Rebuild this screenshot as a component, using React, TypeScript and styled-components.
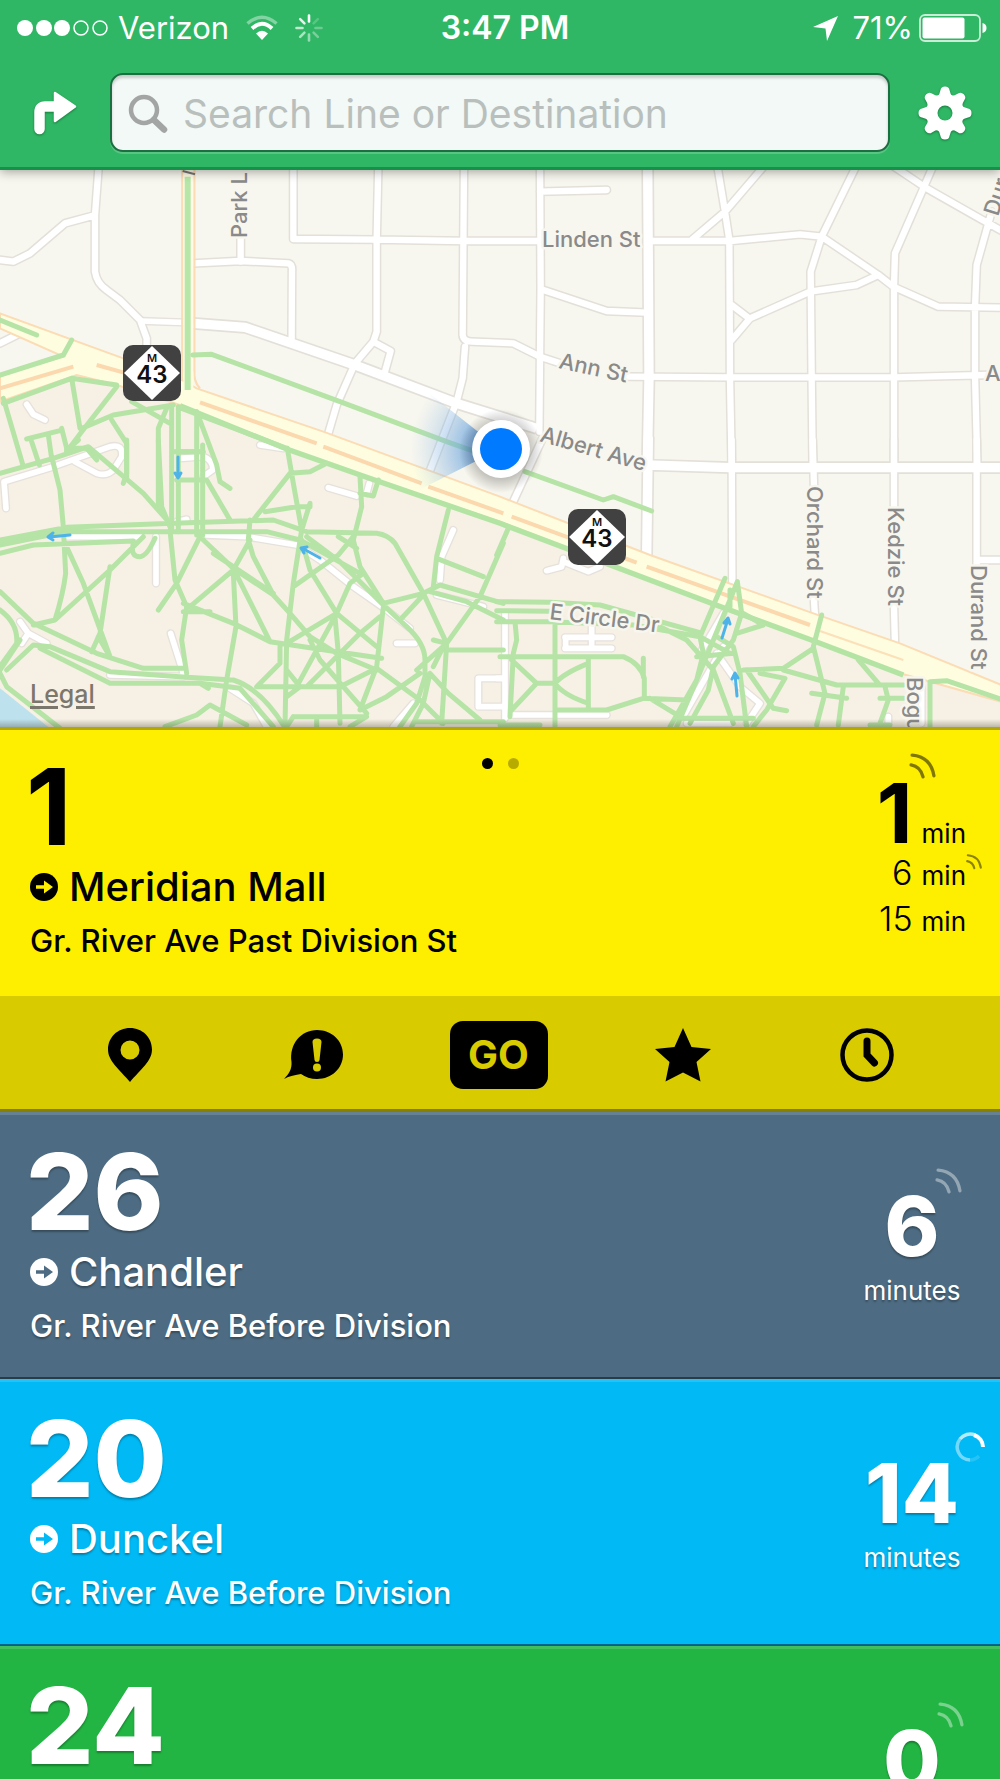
import React from 'react';
import styled, { createGlobalStyle, css } from 'styled-components';

const sans = '"Inter", "Roboto", "Liberation Sans", sans-serif';

const GlobalStyle = createGlobalStyle`
  *, *::before, *::after { box-sizing: border-box; }
  body { margin: 0; font-family: ${sans}; background: #22b543; }
  button, input { font: inherit; }
`;

const Screen = styled.main`
  display: flex;
  flex-direction: column;
  height: 100vh;
  overflow: hidden;
`;

/* ---------- header ---------- */

const Header = styled.header`
  position: relative;
  z-index: 1;
  flex: none;
  background: #2fb765;
  border-bottom: 3px solid #15914a;
  color: #fff;
  box-shadow: 0 2px 10px rgba(0, 0, 0, 0.35);
`;

const StatusBar = styled.div`
  display: grid;
  grid-template-columns: 1fr auto 1fr;
  align-items: center;
  height: 56px;
  padding: 0 7px 0 17px;
  font-size: 31px;
  line-height: 40px;
`;

const StatusGroup = styled.div<{ $end?: boolean }>`
  display: flex;
  align-items: center;
  justify-content: ${(p) => (p.$end ? 'flex-end' : 'flex-start')};
  gap: ${(p) => (p.$end ? 6 : 17)}px;
  padding-right: ${(p) => (p.$end ? 6 : 0)}px;
`;

const Carrier = styled.span`
  display: flex;
  align-items: center;
  gap: 9px;
`;

const Clock = styled.time`
  font-size: 32px;
  font-weight: 600;
`;

const Percent = styled.span`
  padding-left: 8px;
`;

const SearchRow = styled.div`
  display: grid;
  grid-template-columns: 110px 1fr 110px;
  align-items: center;
  padding: 17px 0 15px;
`;

const IconButton = styled.button`
  display: flex;
  align-items: center;
  justify-content: center;
  height: 78px;
  padding: 0;
  border: 0;
  background: none;
  color: inherit;
  cursor: pointer;
  filter: drop-shadow(0 1px 1px rgba(0, 60, 20, 0.5));
`;

const SearchBox = styled.label`
  display: flex;
  align-items: center;
  gap: 15px;
  height: 79px;
  padding: 2px 16px 0;
  border: 2px solid #1c6f40;
  border-radius: 13px;
  background: #f2f9f6;
  box-shadow: inset 0 3px 3px rgba(0, 0, 0, 0.18), 0 2px 0 rgba(255, 255, 255, 0.2);
`;

const SearchInput = styled.input`
  flex: 1;
  min-width: 0;
  padding: 0;
  border: 0;
  outline: 0;
  background: none;
  font-size: 39px;
  line-height: 48px;
  color: #555;
  &::placeholder { color: #b9bfbc; opacity: 1; }
`;

/* ---------- map ---------- */

const MapArea = styled.section`
  position: relative;
  flex: none;
  aspect-ratio: 1000 / 557;
  overflow: hidden;
  background: #f8f7ef;
  &::after {
    content: '';
    position: absolute;
    inset: auto 0 0;
    height: 8px;
    background: linear-gradient(transparent, rgba(60, 50, 30, 0.3));
  }
`;

const MapSvg = styled.svg`
  display: block;
  width: 100%;
  height: 100%;
  font-family: ${sans};
`;

const LegalLink = styled.a`
  position: absolute;
  left: 30px;
  bottom: 17px;
  font-size: 25px;
  line-height: 32px;
  font-weight: 500;
  color: #7c776d;
  text-decoration-thickness: 3px;
  text-underline-offset: 3px;
`;

/* ---------- routes ---------- */

const RouteList = styled.ul`
  flex: 1;
  min-height: 0;
  margin: 0;
  padding: 0;
  list-style: none;
  overflow-y: auto;
  scrollbar-width: none;
`;

const Route = styled.li<{ $bg: string; $dark?: boolean }>`
  background: ${(p) => p.$bg};
  color: ${(p) => (p.$dark ? '#000' : '#fff')};
  text-shadow: ${(p) => (p.$dark ? 'none' : '0 2px 2px rgba(0, 0, 0, 0.3)')};
  box-shadow: inset 0 3px 0 ${(p) => (p.$dark ? 'rgba(90, 80, 0, 0.45)' : 'rgba(255, 255, 255, 0.14)')},
    inset 0 -2px 0 rgba(0, 0, 0, 0.45);
`;

const RouteBody = styled.div<{ $tall?: boolean }>`
  position: relative;
  display: flex;
  justify-content: space-between;
  min-height: ${(p) => (p.$tall ? 269 : 267)}px;
  padding: 41px 0 30px 30px;
`;

const RouteNumber = styled.h2<{ $slim?: boolean }>`
  margin: 0 0 17px -4px;
  font-size: 106px;
  line-height: 78px;
  font-weight: ${(p) => (p.$slim ? 700 : 800)};
`;

const Headsign = styled.p`
  display: flex;
  align-items: center;
  gap: 11px;
  margin: 0 0 10px;
  font-size: 40px;
  line-height: 48px;
  font-weight: 500;
`;

const StopName = styled.p`
  margin: 0;
  font-size: 31px;
  line-height: 40px;
  font-weight: 500;
`;

const Countdown = styled.div`
  flex: none;
  display: flex;
  flex-direction: column;
  align-items: center;
  gap: 18px;
  width: 96px;
  margin: 42px 40px 0 0;
  font-size: 26px;
  line-height: 32px;
`;

const bigTime = css`
  position: relative;
  font-size: 83px;
  line-height: 62px;
`;

const CountdownNumber = styled.strong`
  ${bigTime}
  font-weight: 800;
`;

const Badge = styled.span<{ $lift: number }>`
  position: absolute;
  left: 100%;
  bottom: 100%;
  margin: 0 0 ${(p) => p.$lift}px -4px;
  display: flex;
`;

const Departures = styled.ol`
  flex: none;
  margin: 14px 34px 0 0;
  padding: 0;
  list-style: none;
`;

const Departure = styled.li`
  display: flex;
  align-items: baseline;
  justify-content: flex-end;
  gap: 9px;
  font-size: 34px;
  line-height: 46px;
  font-weight: 300;
`;

const NextTime = styled.strong`
  ${bigTime}
  font-weight: 700;
`;

const Unit = styled.span`
  position: relative;
  font-size: 26px;
  line-height: 32px;
  font-weight: 400;
`;

const UnitBadge = styled.span`
  position: absolute;
  left: 100%;
  bottom: 100%;
  margin-bottom: -10px;
  display: flex;
`;

const Pager = styled.div`
  position: absolute;
  top: 31px;
  left: 0;
  right: 0;
  display: flex;
  justify-content: center;
  gap: 15px;
`;

const PageDot = styled.button<{ $current?: boolean }>`
  width: 11px;
  height: 11px;
  padding: 0;
  border: 0;
  border-radius: 50%;
  background: ${(p) => (p.$current ? '#000' : 'rgba(0, 0, 0, 0.28)')};
`;

const Actions = styled.nav`
  display: flex;
  align-items: center;
  height: 116px;
  padding: 2px 41px 0 38px;
  background: #d8cb00;
  box-shadow: inset 0 -3px 0 #877f00;
`;

const Action = styled.button`
  flex: 1;
  display: flex;
  align-items: center;
  justify-content: center;
  height: 68px;
  padding: 0;
  border: 0;
  background: none;
  color: #000;
  cursor: pointer;
`;

const GoLabel = styled.span`
  width: 98px;
  border-radius: 13px;
  background: #000;
  color: #d8cb00;
  font-size: 40px;
  line-height: 68px;
  font-weight: 700;
`;

/* ---------- icons ---------- */

const SignalDots = () => (
  <svg width="92" height="18" viewBox="0 0 92 18" aria-hidden="true">
    {[8, 27, 45].map((x) => <circle key={x} cx={x} cy="9" r="8" fill="#fff" />)}
    {[64, 83].map((x) => <circle key={x} cx={x} cy="9" r="7" fill="none" stroke="#fff" strokeWidth="1.5" />)}
  </svg>
);

const Wifi = () => (
  <svg width="32" height="26" viewBox="0 0 32 26" fill="none" aria-hidden="true">
    <path d="M1.5 8.500 Q16 -4 30.500 8.500" stroke="#fff" strokeOpacity="0.4" strokeWidth="3.500" />
    <path d="M6 13.500 Q16 4 26 13.500" stroke="#fff" strokeWidth="4" />
    <path d="M10 18.500 Q16 13 22 18.500 L16 25 Z" fill="#fff" />
  </svg>
);

const Activity = () => (
  <svg width="28" height="28" viewBox="-14 -14 28 28" strokeLinecap="round" strokeWidth="2.600" aria-hidden="true">
    {[1, 0.2, 0.3, 0.35, 0.5, 0.6, 0.7, 0.85].map((o, i) => (
      <path key={i} d="M0 -6.500 V-12.500" stroke="#fff" strokeOpacity={o} transform={`rotate(${i * 45})`} />
    ))}
  </svg>
);

const LocationArrow = () => (
  <svg width="25" height="25" viewBox="0 0 25 25" aria-hidden="true">
    <path d="M25 0 L14 25 L12.500 12.500 L0 11 Z" fill="#fff" />
  </svg>
);

const Battery = () => (
  <svg width="68" height="28" viewBox="0 0 68 28" aria-hidden="true">
    <rect x="1" y="1" width="60" height="26" rx="5" fill="none" stroke="#fff" strokeOpacity="0.75" strokeWidth="1.800" />
    <rect x="3.500" y="3.500" width="42" height="21" rx="2" fill="#fff" />
    <path d="M63.500 9 Q67.500 10 67.500 14 Q67.500 18 63.500 19 Z" fill="#fff" />
  </svg>
);

const TurnIcon = () => (
  <svg width="43" height="44" viewBox="0 0 43 44" aria-hidden="true">
    <path d="M5.500 38 V21 Q5.500 15.500 11 15.500 H26" fill="none" stroke="#fff" strokeWidth="10.500" strokeLinecap="round" />
    <path d="M21 2 L41 15.500 L21 30 Z" fill="#fff" stroke="#fff" strokeWidth="2.500" strokeLinejoin="round" />
  </svg>
);

const GearIcon = () => (
  <svg width="54" height="54" viewBox="-27 -27 54 54" aria-hidden="true">
    <defs>
      <mask id="gear-hole">
        <rect x="-27" y="-27" width="54" height="54" fill="#fff" />
        <circle r="7.500" fill="#000" />
      </mask>
    </defs>
    <g mask="url(#gear-hole)" fill="#fff">
      <circle r="19" />
      {[0, 45, 90, 135, 180, 225, 270, 315].map((a) => (
        <path key={a} transform={`rotate(${a})`} d="M-8 -16 Q-5 -19 -4.500 -23 Q-4 -26.500 0 -26.500 Q4 -26.500 4.500 -23 Q5 -19 8 -16 Z" />
      ))}
    </g>
  </svg>
);

const SearchIcon = () => (
  <svg width="40" height="40" viewBox="0 0 40 40" fill="none" stroke="#a2a5a3" aria-hidden="true">
    <circle cx="16" cy="16" r="13" strokeWidth="4.500" />
    <path d="M26 26 L36 35.500" strokeWidth="6.500" strokeLinecap="round" />
  </svg>
);

const DirectionIcon = ({ bg, fg }: { bg: string; fg: string }) => (
  <svg width="28" height="28" viewBox="0 0 28 28" aria-hidden="true">
    <circle cx="14" cy="14" r="14" fill={fg} />
    <path d="M6 12.300 H14 V7.500 L23 14 L14 20.500 V15.700 H6 Z" fill={bg} />
  </svg>
);

const SignalIcon = ({ size, opacity, thick = 3.2 }: { size: number; opacity: number; thick?: number }) => (
  <svg width={size} height={size} viewBox="0 0 26 26" fill="none" stroke="currentColor" strokeOpacity={opacity} strokeWidth={thick} strokeLinecap="round" aria-hidden="true">
    <path d="M3 2 Q21 3.500 24 22" />
    <path d="M2 11.500 Q11 13 13.500 23" />
  </svg>
);

const RefreshIcon = () => (
  <svg width="30" height="30" viewBox="0 0 30 30" fill="none" stroke="#fff" strokeWidth="3.500" aria-hidden="true">
    <path d="M15 28 A13 13 0 0 1 5 7" strokeOpacity="0.45" />
    <path d="M5 7 A13 13 0 0 1 20 3" strokeOpacity="0.7" />
    <path d="M19 3 A13 13 0 0 1 28 15" strokeWidth="4" />
    <path d="M15 28 A13 13 0 0 0 24 24" strokeOpacity="0.15" />
  </svg>
);

const PinIcon = () => (
  <svg width="44" height="54" viewBox="0 0 44 54" aria-hidden="true">
    <path fillRule="evenodd" d="M22 0 C34.500 0 44 9.500 44 21.500 C44 33 33 41 22 54 C11 41 0 33 0 21.500 C0 9.500 9.500 0 22 0 Z M22 12.500 A9.500 9.500 0 1 0 22 31.500 A9.500 9.500 0 1 0 22 12.500 Z" />
  </svg>
);

const AlertIcon = () => (
  <svg width="60" height="52" viewBox="0 0 60 52" aria-hidden="true">
    <path d="M33 1 C48 1 59 12 59 25.500 C59 39 48 50 33 50 C27 50 21 48 17 45 C12 46 5 47 0 50 C5 45 8 40 7.500 33 C5 15 17 1 33 1 Z" />
    <path d="M28.500 13 Q28.500 9.500 33 9.500 Q37.500 9.500 37.500 13 L35.500 31 Q35.300 33 33 33 Q30.700 33 30.500 31 Z" fill="#d8cb00" />
    <circle cx="33" cy="38.500" r="4" fill="#d8cb00" />
  </svg>
);

const StarIcon = () => (
  <svg width="56" height="54" viewBox="0 0 56 54" aria-hidden="true">
    <path d="M28 0 L36.500 19 L56 21 L41.500 34 L45.500 53.500 L28 44.500 L10.500 53.500 L14.500 34 L0 21 L19.500 19 Z" />
  </svg>
);

const ClockIcon = () => (
  <svg width="54" height="54" viewBox="0 0 54 54" fill="none" stroke="#000" aria-hidden="true">
    <circle cx="27" cy="27" r="24.500" strokeWidth="4.500" />
    <path d="M27 13 V27 L34.500 35" strokeWidth="7" strokeLinecap="round" />
  </svg>
);

/* ---------- map data: each tile is drawn on a 3x grid ---------- */

type Tile = { x: number; y: number; streets: string; avenues: string; drives: string; paths: string };

const tiles: Tile[] = [
  {
    x: 0, y: 165,
    streets: `M297 -10 L285 150 V320 Q290 355 320 375 L360 405 L420 465 L440 520 V560
      M0 285 L40 290 L90 265 L195 175 L280 152 M722 290 V215 M580 295 L720 288 L865 295 Q878 298 876 320 L875 520
      M880 0 V222 L1130 224 L1390 228 H1620 M1135 0 L1130 225 V500 L1120 530 L1065 595 L1010 720 L985 805
      M1120 530 L1172 558 L1155 620 M1392 0 L1388 510 Q1390 530 1415 530 L1540 535 L1620 575 L1690 598
      M1395 545 L1388 640 L1370 710 L1275 955 M0 535 L60 505`,
    avenues: 'M580 475 L735 487 L1065 600 L1370 715 L1610 790',
    drives: 'M425 468 L570 473 M80 718 L100 748 L135 765',
    paths: `M578 570 L635 568 L1020 710 L1340 830 L1440 865 M0 465 L110 510 M0 630 L190 570 L215 525
      M10 715 L215 640 L350 660 M10 700 L70 905 M215 640 L240 790 M350 665 L245 800 L200 860 M245 790 L340 750 L520 720
      M395 710 L510 775 M500 730 L475 790 V1020 M335 765 L380 835 V940 M80 822 L180 797 M95 830 L118 900 M145 810 L155 880
      M185 790 L200 850 M205 850 H260 L290 885 M545 730 L860 850 M590 740 L650 900 L660 950 L690 970 M520 860 H610
      M515 725 V1100 M535 725 V1100 M590 750 V1110 M608 840 V1110`,
  },
  {
    x: 500, y: 165,
    streets: `M120 -10 L122 370 L120 575 L118 800 M120 80 L320 75 M450 228 H690 L900 208 L965 215 L1135 330 L1180 365 L1315 425 L1510 428
      M650 -10 L675 140 L688 225 L690 640 L695 900 M795 0 L675 140 L575 225 M1075 -10 L965 215 L932 320 L935 640 L938 900
      M1135 330 L1070 360 L930 380 L750 460 L695 525 M695 420 L745 458 M1305 -10 L1185 265 L1182 365 V900
      M1160 -10 L1280 70 L1465 175 L1510 200 M1475 140 L1465 175 L1430 300 L1425 430 V630 L1432 900
      M130 375 L320 438 L440 443 M385 635 L690 637 H1182 L1460 630 M130 815 L35 1020`,
    avenues: 'M443 -10 L447 640 L442 900', drives: '', paths: '',
  },
  {
    x: 0, y: 440,
    streets: '', avenues: '',
    drives: `M18 205 L12 125 L160 80 L330 20 Q370 10 365 50 L340 90 Q320 110 290 100 L225 65 M540 55 L610 50 Q640 60 638 90 L610 110
      M530 245 L560 238 M468 290 V430 M512 580 L550 700 M780 15 L850 25 M985 143 L1070 168 M1108 130 L1100 160 M1360 270 L1325 350 L1320 420
      M60 545 L85 580 L140 610 M85 580 L65 610 M200 290 H420 M620 285 L740 290 L890 315 L960 360 L1060 440 L1160 510 L1230 565
      M1310 465 L1450 500 M1190 610 H1245 M1510 715 H1435 V800 H1510 M1180 860 L1240 790 M330 705 L550 710 M690 745 L760 790 L800 860`,
    paths: `M0 100 L160 55 L265 20 L430 160 L510 250 M155 50 L180 150 L190 260 L197 400 Q190 460 165 540 L100 555 M235 0 L200 30
      M380 0 V100 L370 130 M475 0 L485 200 L510 260 M530 35 H600 M530 120 H620 L690 240
      M0 300 L200 262 L520 250 L820 240 L920 275 L1130 280 Q1165 285 1185 310 L1270 460 M0 315 L200 275 H800 L900 300 L990 350 L1080 400
      M0 340 L100 315 L400 303 M195 310 L250 430 L330 650 M430 290 L330 390 L165 540 M330 380 L300 580 L275 635 M295 590 L330 650
      M400 310 Q390 350 420 350 Q440 350 465 295 M510 270 L525 420 L560 500 L545 600 L560 700 M600 290 L530 430 L475 510
      M610 300 L700 385 L820 465 L870 520 L930 590 L1010 640 L1130 690 M750 240 L745 300 L760 350 L820 465 M750 300 L700 390 L570 500
      M550 490 L700 550 L810 605 L1010 635 L1145 655 M550 515 H630 M700 385 L810 605 M700 400 L708 560 L680 720 L660 860
      M862 25 L880 130 L905 270 L880 430 L860 600 L855 860 M870 100 L930 95 L980 70 M870 100 L760 240 M795 215 L890 200 H930 V190 L905 270
      M1080 110 L1085 200 L1060 300 L1080 380 L1150 490 M1080 160 L1120 168 L1135 120 M1015 290 L1070 325 M1060 290 L1015 345 L880 440
      M905 300 L930 390 L1010 520 L1130 620 M1090 400 L1050 430 L1010 520 L890 740 M1010 520 L860 610 M1005 530 L1015 640 L1020 850
      M920 290 L1020 365 L1150 495 L1220 560 Q1275 610 1275 660 V710 L1250 790 L1200 860 M1290 700 L1270 790 L1235 860
      M1150 490 L1270 460 L1320 435 L1510 490 M1270 465 L1200 540 M1270 460 L1340 610 M1510 310 L1440 470 L1340 610 L1250 690
      M1345 210 L1310 350 L1300 440 M1310 355 L1450 410 M1290 455 L1400 485 L1510 540 M1340 610 L1325 850 M1340 630 H1510
      M1150 500 L1130 680 L1080 810 M1140 530 L1080 580 L920 740 M840 620 V670 L770 740 H1020 M930 600 L960 660 L1100 820
      M860 690 L900 740 L860 770 M1020 740 L1130 685 L1260 780 L1330 850 M1260 700 L1160 770 L1080 810 M1290 700 L1345 760 L1440 840
      M0 455 L100 550 L290 640 L430 685 H550 M0 510 Q55 550 50 610 L0 680 M20 690 L100 615 L150 620 L330 695 L560 712 L700 720 Q780 745 850 855
      M120 625 L330 730 H600 L720 745 L820 860 M0 700 L20 740 L180 865 M495 860 L590 825 L630 795 L740 855 M600 730 L625 745
      M880 830 H1100 L1050 860 M950 830 V860 M880 830 L860 860 M1250 845 H1510 M640 340 L820 460 M1300 600 L1340 610 M1300 680 L1330 620 M0 690 L60 600`,
  },
  {
    x: 500, y: 440,
    streets: 'M695 0 L697 440 M938 0 L942 140 M942 480 L945 530 M1182 0 V205 M1182 500 L1185 615 M1430 0 V380 M1435 360 H1510',
    avenues: 'M445 -10 L440 350 M440 75 L690 83 H1510',
    drives: `M15 520 V640 M15 660 V835 M190 355 L185 380 L140 392 M190 365 L265 395 L300 380 M195 592 H335 M195 625 H335 M197 592 V625
      M275 560 V620 M40 825 H320 M555 820 L670 620 M600 640 L670 520 M650 640 L720 740 L780 790 L740 850 M560 850 H690 M1165 850 V830 M1265 740 V850 M-10 715 H15`,
    paths: `M75 95 L310 180 L340 170 L455 213 M-10 485 L150 487 L300 495 L600 578 M-10 512 L150 514 M-10 545 H150 L400 555 L600 590
      M45 545 L50 600 L40 640 L30 830 M165 550 V860 M0 650 H370 Q420 670 433 715 V775 M430 655 V710 M35 660 L110 730 L35 810
      M110 730 H165 Q190 700 265 670 M165 730 Q190 765 265 790 M265 655 V810 M165 810 H320 L430 775 L560 780 M450 775 L540 830 M0 855 H120
      M675 415 L600 590 L610 640 L590 720 L510 860 M712 425 L690 480 L590 720 L530 860 M712 425 L725 520 L700 600 L640 680 L625 750 L570 850
      M690 450 V500 M480 560 L560 600 L640 690 L700 850 M600 590 L690 640 M590 650 L700 640 M650 590 L700 620 L720 700 L740 860
      M740 690 L820 805 L860 812 M730 520 L790 555 L710 580 M730 690 L850 685 L940 625 M965 525 L940 620 L975 760 L950 855
      M850 690 L1010 735 H1210 M780 700 L855 715 L800 810 L760 860 M935 760 L1040 775 M1030 740 L1015 855 M1075 660 L1135 730
      M1155 740 L1165 780 L1140 850 M1140 775 H1210 M1110 855 H1170 M1290 725 V860 M540 835 H760 M-10 345 L25 265
      M1290 725 L1340 722 L1510 780`,
  },
];

const at = (t: Tile) => `translate(${t.x} ${t.y}) scale(0.33333)`;

const Layer = ({ pick, stroke, width }: { pick: 'streets' | 'avenues' | 'drives' | 'paths'; stroke: string; width: number }) => (
  <g fill="none" stroke={stroke} strokeWidth={width} strokeLinejoin="round" strokeLinecap={pick === 'avenues' ? 'butt' : 'round'}>
    {tiles.map((t) => <path key={`${t.x}-${t.y}`} d={t[pick]} transform={at(t)} />)}
  </g>
);

const labels: { text: string; x: number; y: number; turn: number }[] = [
  { text: 'Linden St', x: 542, y: 247, turn: 0 },
  { text: 'Ann St', x: 558, y: 368, turn: 12 },
  { text: 'Albert Ave', x: 539, y: 441, turn: 16 },
  { text: 'E Circle Dr', x: 549, y: 619, turn: 7 },
  { text: 'Orchard St', x: 807, y: 486, turn: 90 },
  { text: 'Kedzie St', x: 888, y: 507, turn: 90 },
  { text: 'Durand St', x: 971, y: 565, turn: 90 },
  { text: 'Bogu', x: 907, y: 677, turn: 90 },
  { text: 'Park L', x: 247, y: 238, turn: -90 },
  { text: 'Dur', x: 998, y: 217, turn: -72 },
  { text: 'A', x: 985, y: 381, turn: 0 },
];

const Shield = ({ x, y }: { x: number; y: number }) => (
  <g transform={`translate(${x} ${y})`} textAnchor="middle" fill="#111">
    <rect width="58" height="56" rx="10" fill="#414141" />
    <path d="M29 1 L57 28 L29 55 L1 28 Z" fill="#fff" />
    <text x="29" y="17" fontSize="11" fontWeight="600">M</text>
    <text x="29" y="38" fontSize="24" fontWeight="600">43</text>
  </g>
);

const BAND = 'M0 445 L370 580 L545 645 L590 670 L970 800 L1500 995 L1950 1170 L2440 1345 L2700 1435 L3010 1562 V1612 L2700 1525 L2440 1425 L2140 1315 L1500 1070 L1100 935 L860 850 L540 720 L350 660 L230 630 L0 710 V630 L190 575 L0 490 Z';
const SOUTH = 'M0 710 L230 630 L350 660 L540 720 L860 850 L1100 935 L1500 1070 L2140 1315 L2440 1425 L2700 1525 L3010 1612 V1700 H0 Z';

const MapView = () => (
  <MapSvg viewBox="0 170 1000 557" preserveAspectRatio="xMidYMid slice" role="img" aria-label="Map of nearby streets">
    <defs>
      <radialGradient id="cone" gradientUnits="userSpaceOnUse" cx="500" cy="449" r="90">
        <stop offset="0.3" stopColor="#5b9bdc" stopOpacity="0.75" />
        <stop offset="1" stopColor="#a9c9e8" stopOpacity="0" />
      </radialGradient>
      <radialGradient id="dot-shadow">
        <stop offset="0.6" stopColor="#000" stopOpacity="0.25" />
        <stop offset="1" stopColor="#000" stopOpacity="0" />
      </radialGradient>
    </defs>
    <g transform="translate(0 165) scale(0.33333)">
      <path d={SOUTH} fill="#f6f1e4" />
      <path d="M0 1570 L150 1690 H0 Z" fill="#bde2ee" />
    </g>
    <Layer pick="drives" stroke="#e6e1dc" width={25} />
    <Layer pick="streets" stroke="#e3e0d9" width={28} />
    <Layer pick="avenues" stroke="#e3e0d9" width={38} />
    <Layer pick="drives" stroke="#fff" width={17} />
    <Layer pick="streets" stroke="#fff" width={19} />
    <Layer pick="avenues" stroke="#fff" width={28} />
    <g transform="translate(0 165) scale(0.33333)" fill="none">
      <path d="M547 0 V660 M583 0 V630 Q585 655 600 670" stroke="#fbdcb4" strokeWidth="7" />
      <path d="M565 0 V680" stroke="#fffbe6" strokeWidth="30" />
      <path d={BAND} fill="#fefde0" stroke="#fbdcb4" strokeWidth="6" />
      <path d="M565 620 V700" stroke="#fefde0" strokeWidth="30" />
      <path d="M0 670 L220 605 M290 600 L380 625 M600 712 L950 835 M970 845 L1265 955 M1285 965 L1510 1045 M1535 1055 L1910 1193 M1940 1205 L2430 1380" stroke="#fbd8ae" strokeWidth="12" />
      <path d="M2460 1398 L2710 1485" stroke="#fbe0b8" strokeWidth="6" />
      <path d="M540 722 L860 852 L1100 937 L1500 1075 L2140 1317 L2440 1427 L2710 1530" stroke="#b3e4a4" strokeWidth="16" />
      <path d="M563 35 V675" stroke="#b6e6a8" strokeWidth="18" />
      <path d="M548 18 L585 28" stroke="#777" strokeWidth="6" />
    </g>
    <Layer pick="paths" stroke="#b5e4a6" width={15} />
    <g fill="none" stroke="#4db3e8" strokeWidth="3" strokeLinecap="round" strokeLinejoin="round">
      <path d="M178 457 V477 M175 473 L178 478 L181 473" />
      <path d="M70 535 L49 537 M53 533 L48 537 L53 540" />
      <path d="M320 558 L302 548 M304 553 L301 548 L307 547" />
      <path d="M722 638 L728 619 M724 623 L728 618 L730 624" />
      <path d="M737 696 L735 674 M732 679 L735 673 L738 678" />
    </g>
    <g fontSize="22" fontWeight="500" fill="#8a8a8a" stroke="#f8f7ef" strokeWidth="5" strokeLinejoin="round" paintOrder="stroke">
      {labels.map((l) => (
        <text key={l.text} transform={`translate(${l.x} ${l.y}) rotate(${l.turn})`}>{l.text}</text>
      ))}
    </g>
    <Shield x={123} y={345} />
    <Shield x={568} y={509} />
    <path d="M500 449 L415 382 L390 449 L415 492 Z" fill="url(#cone)" />
    <circle cx="501" cy="451" r="42" fill="url(#dot-shadow)" />
    <circle cx="501" cy="449" r="29" fill="#fff" />
    <circle cx="501" cy="449" r="21" fill="#007aff" />
  </MapSvg>
);

/* ---------- page ---------- */

type RouteInfo = { number: string; color: string; headsign?: string; stop?: string; time: string; unit?: string; refreshing?: boolean };

const routes: RouteInfo[] = [
  { number: '26', color: '#4d6c83', headsign: 'Chandler', stop: 'Gr. River Ave Before Division', time: '6', unit: 'minutes' },
  { number: '20', color: '#00b9f5', headsign: 'Dunckel', stop: 'Gr. River Ave Before Division', time: '14', unit: 'minutes', refreshing: true },
  { number: '24', color: '#22b543', time: '0' },
];

const RouteRow = ({ route }: { route: RouteInfo }) => (
  <Route $bg={route.color}>
    <RouteBody>
      <div>
        <RouteNumber>{route.number}</RouteNumber>
        {route.headsign && (
          <Headsign>
            <DirectionIcon fg="#fff" bg={route.color} />
            {route.headsign}
          </Headsign>
        )}
        {route.stop && <StopName>{route.stop}</StopName>}
      </div>
      <Countdown>
        <CountdownNumber>
          {route.time}
          <Badge $lift={0}>{route.refreshing ? <RefreshIcon /> : <SignalIcon size={27} opacity={0.4} />}</Badge>
        </CountdownNumber>
        {route.unit}
      </Countdown>
    </RouteBody>
  </Route>
);

export default function App() {
  return (
    <Screen>
      <GlobalStyle />
      <Header>
        <StatusBar>
          <StatusGroup>
            <Carrier><SignalDots />Verizon</Carrier>
            <Wifi />
            <Activity />
          </StatusGroup>
          <Clock>3:47 PM</Clock>
          <StatusGroup $end>
            <LocationArrow />
            <Percent>71%</Percent>
            <Battery />
          </StatusGroup>
        </StatusBar>
        <SearchRow>
          <IconButton type="button" aria-label="Directions"><TurnIcon /></IconButton>
          <SearchBox>
            <SearchIcon />
            <SearchInput type="text" aria-label="Search" placeholder="Search Line or Destination" />
          </SearchBox>
          <IconButton type="button" aria-label="Settings"><GearIcon /></IconButton>
        </SearchRow>
      </Header>
      <MapArea>
        <MapView />
        <LegalLink href="#legal">Legal</LegalLink>
      </MapArea>
      <RouteList>
        <Route $bg="#feee00" $dark>
          <RouteBody $tall>
            <div>
              <RouteNumber $slim>1</RouteNumber>
              <Headsign><DirectionIcon fg="#000" bg="#feee00" />Meridian Mall</Headsign>
              <StopName>Gr. River Ave Past Division St</StopName>
            </div>
            <Pager>
              <PageDot type="button" aria-label="Page 1" $current />
              <PageDot type="button" aria-label="Page 2" />
            </Pager>
            <Departures>
              <Departure>
                <NextTime>1<Badge $lift={2}><SignalIcon size={27} opacity={0.5} /></Badge></NextTime>
                <Unit>min</Unit>
              </Departure>
              <Departure>
                6
                <Unit>min<UnitBadge><SignalIcon size={16} opacity={0.45} thick={3.5} /></UnitBadge></Unit>
              </Departure>
              <Departure>15<Unit>min</Unit></Departure>
            </Departures>
          </RouteBody>
          <Actions aria-label="Route actions">
            <Action type="button" aria-label="Stop location"><PinIcon /></Action>
            <Action type="button" aria-label="Report"><AlertIcon /></Action>
            <Action type="button"><GoLabel>GO</GoLabel></Action>
            <Action type="button" aria-label="Favorite"><StarIcon /></Action>
            <Action type="button" aria-label="Schedule"><ClockIcon /></Action>
          </Actions>
        </Route>
        {routes.map((r) => <RouteRow key={r.number} route={r} />)}
      </RouteList>
    </Screen>
  );
}
